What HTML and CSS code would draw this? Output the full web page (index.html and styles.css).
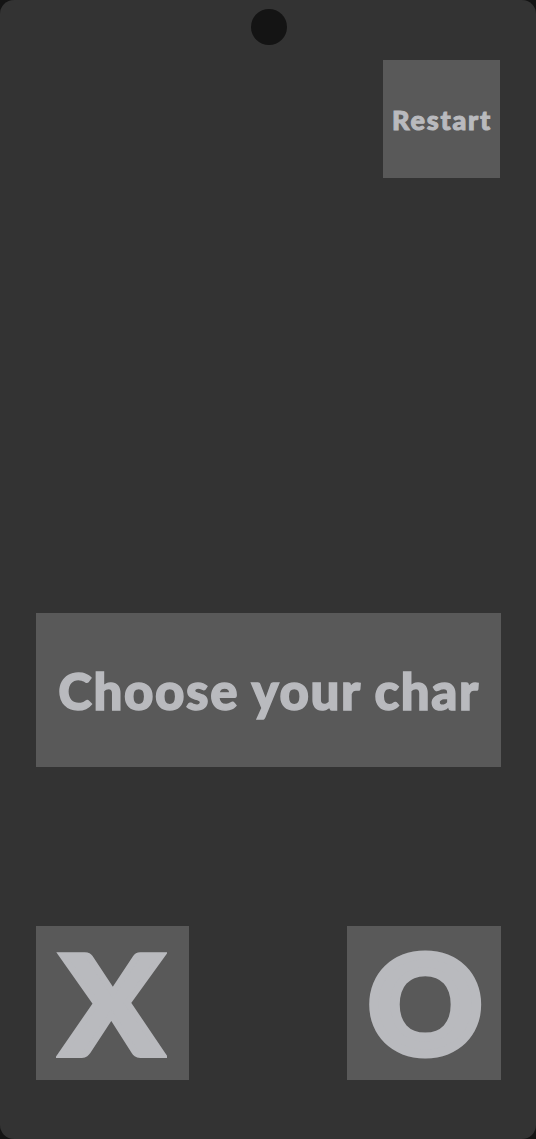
FILE: index.html
```html
<!DOCTYPE html>
<html lang="en">
<head>
<meta charset="utf-8">
<title>Tic Tac Toe</title>
<link rel="stylesheet" href="styles.css">
</head>
<body>
<div class="phone">
  <div class="camera"></div>
  <div class="top-row">
    <button class="btn restart">Restart</button>
  </div>
  <div class="btn banner">Choose your char</div>
  <div class="choices">
    <button class="btn choice choice-x"><span class="glyph glyph-x">X</span></button>
    <button class="btn choice choice-o"><span class="glyph glyph-o">O</span></button>
  </div>
</div>
</body>
</html>
```

FILE: styles.css
```css
html, body {
  margin: 0;
  padding: 0;
  background: #141414;
}

.phone {
  box-sizing: border-box;
  height: 1139px;
  width: 536px;
  background: #333333;
  border-radius: 14px;
  display: flex;
  flex-direction: column;
  padding: 9px 35px 0 36px;
  font-family: "Lato", "DejaVu Sans", sans-serif;
  font-weight: 900;
  color: #b9babe;
}

.camera {
  align-self: center;
  margin-left: 1px;
  width: 36px;
  height: 36px;
  border-radius: 50%;
  background: #141414;
}

.top-row {
  display: flex;
  justify-content: flex-end;
  margin-top: 15px;
  padding-right: 1px;
}

.btn {
  background: #595959;
  border: none;
  padding: 0;
  margin: 0;
  color: #b9babe;
  font-family: inherit;
  font-weight: 900;
  display: flex;
  align-items: center;
  justify-content: center;
  -webkit-text-stroke: 1.5px #b9babe;
}

.restart {
  width: 117px;
  height: 118px;
  font-size: 27px;
  letter-spacing: 1.8px;
  padding-left: 1px;
  -webkit-text-stroke: 1px #b9babe;
}

.banner {
  margin-top: 435px;
  height: 154px;
  font-size: 51px;
  letter-spacing: 1.6px;
  padding-left: 1px;
}

.choices {
  margin-top: 159px;
  display: flex;
  justify-content: space-between;
}

.choice {
  width: 153px;
  height: 154px;
  font-size: 138px;
  line-height: 1;
}

.choice-o {
  width: 154px;
}

.glyph {
  display: block;
}

.glyph-x {
  transform: scaleX(1.08);
  -webkit-text-stroke: 6px #b9babe;
  margin-left: -1px;
  margin-top: -2px;
}

.glyph-o {
  transform: scaleX(1.03);
  -webkit-text-stroke: 9px #b9babe;
  font-size: 134px;
  margin-left: 2px;
  margin-top: -2px;
}
```
